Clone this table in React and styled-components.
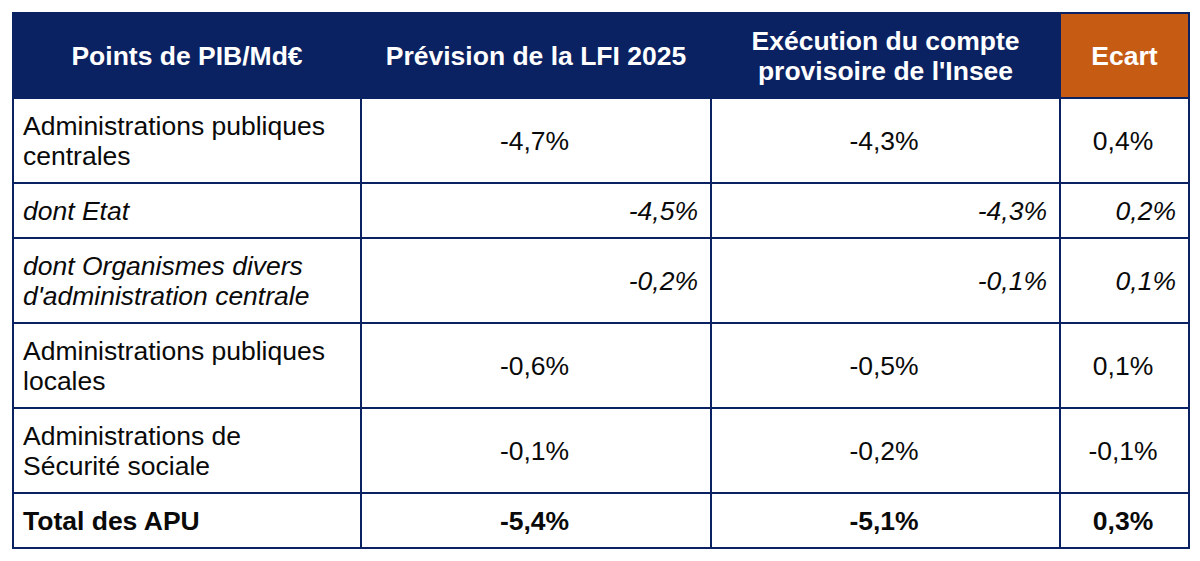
import React from 'react';
import styled, { createGlobalStyle } from 'styled-components';

const GlobalStyle = createGlobalStyle`
  html, body {
    margin: 0;
    padding: 0;
    background: #ffffff;
  }
`;

const Page = styled.div`
  padding: 12px 12px 0 12px;
  font-family: 'Liberation Sans', Arial, sans-serif;
  color: #0a0a0a;
`;

const Table = styled.table`
  width: 1176px;
  border-collapse: collapse;
  table-layout: fixed;
  border: 2px solid #0a2162;
`;

const HeadCell = styled.th`
  height: 83px;
  padding: 0 6px;
  background: ${p => (p.$accent ? '#c65b14' : '#0a2162')};
  color: #ffffff;
  font-size: 26.5px;
  font-weight: 700;
  line-height: 30px;
  text-align: center;
  border: 2px solid #0a2162;
`;

const Cell = styled.td`
  height: ${p => (p.$short ? '53px' : '83px')};
  padding: 0 12px 0 9px;
  border: 2px solid #0a2162;
  font-size: 26.5px;
  line-height: 30px;
  text-align: ${p => p.$align || 'left'};
  font-style: ${p => (p.$italic ? 'italic' : 'normal')};
  font-weight: ${p => (p.$bold ? 700 : 400)};
`;

const rows = [
  { label: ['Administrations publiques', 'centrales'], lfi: '-4,7%', insee: '-4,3%', ecart: '0,4%' },
  { label: ['dont Etat'], lfi: '-4,5%', insee: '-4,3%', ecart: '0,2%', sub: true, short: true },
  { label: ['dont Organismes divers', "d'administration centrale"], lfi: '-0,2%', insee: '-0,1%', ecart: '0,1%', sub: true },
  { label: ['Administrations publiques', 'locales'], lfi: '-0,6%', insee: '-0,5%', ecart: '0,1%' },
  { label: ['Administrations de', 'Sécurité sociale'], lfi: '-0,1%', insee: '-0,2%', ecart: '-0,1%' },
  { label: ['Total des APU'], lfi: '-5,4%', insee: '-5,1%', ecart: '0,3%', bold: true, short: true },
];

const Label = ({ lines }) => (
  <>
    {lines.map((l, i) => (
      <React.Fragment key={i}>
        {i > 0 && <br />}
        {l}
      </React.Fragment>
    ))}
  </>
);

export default function App() {
  return (
    <Page>
      <GlobalStyle />
      <Table>
        <colgroup>
          <col style={{ width: 348 }} />
          <col style={{ width: 350 }} />
          <col style={{ width: 349 }} />
          <col style={{ width: 129 }} />
        </colgroup>
        <thead>
          <tr>
            <HeadCell>Points de PIB/Md€</HeadCell>
            <HeadCell>Prévision de la LFI 2025</HeadCell>
            <HeadCell>Exécution du compte<br />provisoire de l'Insee</HeadCell>
            <HeadCell $accent>Ecart</HeadCell>
          </tr>
        </thead>
        <tbody>
          {rows.map((r, i) => {
            const numAlign = r.sub ? 'right' : 'center';
            return (
              <tr key={i}>
                <Cell $short={r.short} $italic={r.sub} $bold={r.bold}>
                  <Label lines={r.label} />
                </Cell>
                <Cell $short={r.short} $italic={r.sub} $bold={r.bold} $align={numAlign}>{r.lfi}</Cell>
                <Cell $short={r.short} $italic={r.sub} $bold={r.bold} $align={numAlign}>{r.insee}</Cell>
                <Cell $short={r.short} $italic={r.sub} $bold={r.bold} $align={numAlign}>{r.ecart}</Cell>
              </tr>
            );
          })}
        </tbody>
      </Table>
    </Page>
  );
}
